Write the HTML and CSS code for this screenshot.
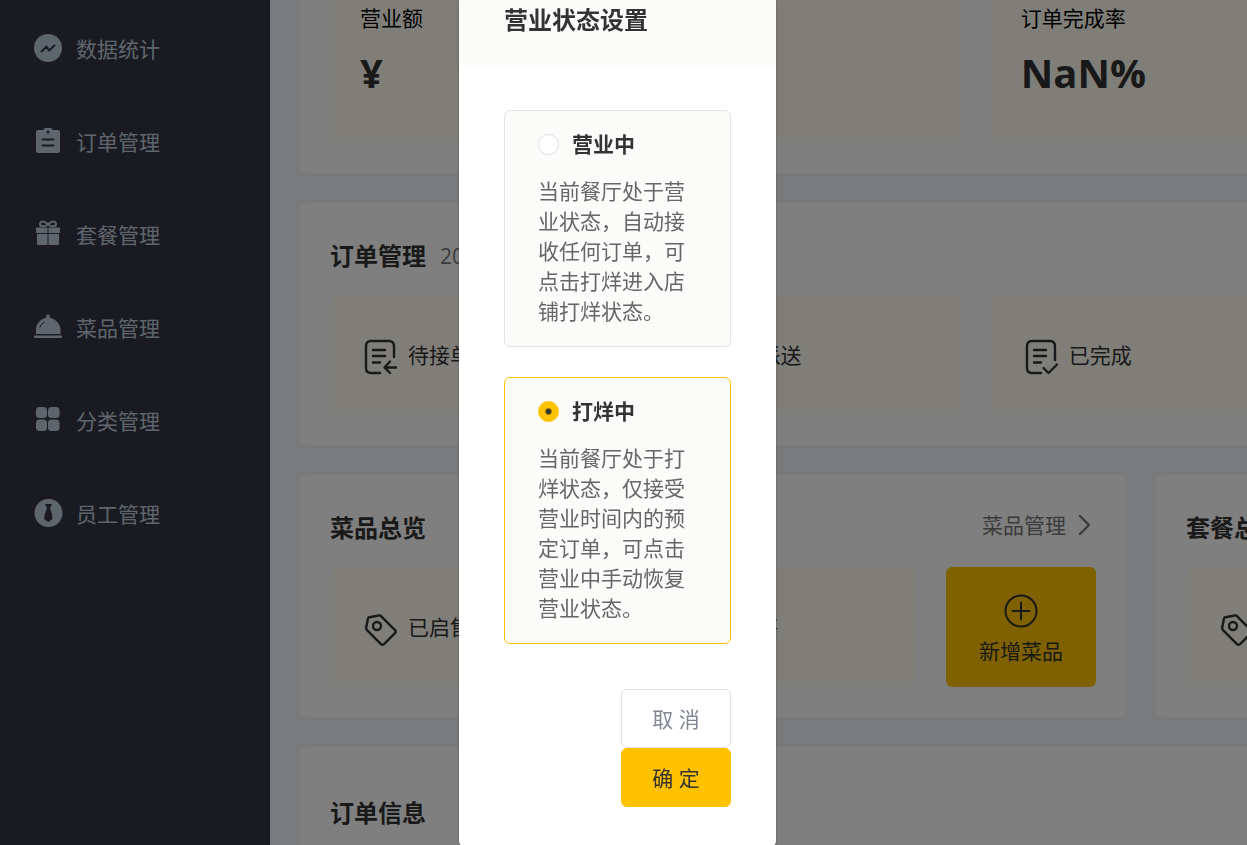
FILE: index.html
```html
<!DOCTYPE html>
<html lang="zh-CN">
<head>
    <meta charset="UTF-8">
    <meta name="viewport" content="width=device-width, initial-scale=1.0">
    <title>工作台</title>
    <link rel="stylesheet" href="styles.css">
</head>
<body>
    <div class="layout">
        <nav class="sidebar">
            <a class="menu-item" href="#">
                <svg class="menu-icon" viewBox="0 0 28 28"><circle cx="14" cy="13" r="14"/><path class="cut" d="M7.5 16.5 L12.5 11.5 L15 15.5 L20.5 10.5"/></svg>
                <span>数据统计</span>
            </a>
            <a class="menu-item" href="#">
                <svg class="menu-icon" viewBox="0 0 28 28"><path d="M4 2H9.500L10.500 0H17.500L18.500 2H24Q26 2 26 4V23Q26 25 24 25H4Q2 25 2 23V4Q2 2 4 2Z"/><circle class="hole" cx="14" cy="4" r="1.500"/><path class="cut" d="M8.500 11.500H19.500M8.500 17.500H19.500"/></svg>
                <span>订单管理</span>
            </a>
            <a class="menu-item" href="#">
                <svg class="menu-icon" viewBox="0 0 28 28"><path class="line" d="M14 3.500C11-.5 6-.5 6 3C6 6 11 6 14 3.500C17-.5 22-.5 22 3C22 6 17 6 14 3.500Z"/><path d="M3 6.500H13.500V12H2V7.500Q2 6.500 3 6.500ZM14.500 6.500H25Q26 6.500 26 7.500V12H14.500ZM3 13H13.500V24H4Q3 24 3 23ZM14.500 13H25V23Q25 24 24 24H14.500Z"/></svg>
                <span>套餐管理</span>
            </a>
            <a class="menu-item" href="#">
                <svg class="menu-icon" viewBox="0 0 28 28"><path d="M12 4V2.500A2 2 0 0 1 16 2.500V4C22 5 26.500 10 26.500 16V20H2V16C2 10 6 5 12 4Z"/><path class="cut thin" d="M6 13Q7 9.500 10.500 8"/><rect x="0" y="21.500" width="28" height="2.500" rx="1"/></svg>
                <span>菜品管理</span>
            </a>
            <a class="menu-item" href="#">
                <svg class="menu-icon" viewBox="0 0 28 28"><rect x="2" y="0" width="11" height="11" rx="3.500"/><rect x="14" y="0" width="11.500" height="11" rx="3.500"/><rect x="2" y="12.500" width="11" height="11.500" rx="3.500"/><rect x="14" y="12.500" width="11.500" height="11.500" rx="3.500"/></svg>
                <span>分类管理</span>
            </a>
            <a class="menu-item" href="#">
                <svg class="menu-icon" viewBox="0 0 28 28"><circle cx="14.500" cy="13" r="14"/><path class="hole" d="M11 4H18L16 8Q18.500 14 18.500 19L14.500 22L10 19Q10.500 13 13 8Z"/></svg>
                <span>员工管理</span>
            </a>
        </nav>

        <main class="content">
            <div class="board">
                <section class="card today">
                    <ul class="grid five">
                        <li class="stat"><p>营业额</p><strong>¥</strong></li>
                        <li class="stat"></li>
                        <li class="stat"><p>订单完成率</p><strong>NaN%</strong></li>
                        <li class="stat"></li>
                        <li class="stat"></li>
                    </ul>
                </section>

                <section class="card">
                    <header class="card-head">
                        <h2>订单管理</h2>
                        <span class="date">20</span>
                    </header>
                    <ul class="grid five">
                        <li class="tile">
                            <svg class="tile-icon" viewBox="0 -2 33 36"><path d="M29 18V7Q29 2 24 2H6Q1 2 1 7V29Q1 34 6 34H15M8 11H20M8 17H20M8 23.500H15M31 28.500H20M25 22.500L19.500 28.500L25 34"/></svg>
                            <span>待接单</span>
                        </li>
                        <li class="tile">
                            <svg class="tile-icon" viewBox="0 -2 33 36"><path d="M29 18V7Q29 2 24 2H6Q1 2 1 7V29Q1 34 6 34H15M8 11H20M8 17H20M8 23.500H15"/></svg>
                            <span>待派送</span>
                        </li>
                        <li class="tile">
                            <svg class="tile-icon" viewBox="0 -2 33 36"><path d="M29 21V7Q29 2 24 2H6Q1 2 1 7V29Q1 34 6 34H15M8 11H20M8 17H20M8 23.500H15M17.500 29L22.500 34L31 25.500"/></svg>
                            <span>已完成</span>
                        </li>
                        <li class="tile"></li>
                        <li class="tile"></li>
                    </ul>
                </section>

                <div class="grid two">
                    <section class="card">
                        <header class="card-head">
                            <h2>菜品总览</h2>
                            <a class="more" href="#">菜品管理
                                <svg class="arrow" viewBox="0 0 14 22"><path d="M2 2L11 11L2 20"/></svg>
                            </a>
                        </header>
                        <ul class="grid overview">
                            <li class="tile">
                                <svg class="tile-icon" viewBox="0 -2 33 36"><path d="M3.500 6.500L13.500 4.500Q15 4.200 16 5.200L30 19.200Q31.500 20.700 30 22.200L19 33.200Q17.500 34.500 16 33.200L2 19.200Q1 18 1.200 16.500L3 7.500Q3.200 6.700 3.500 6.500Z"/><circle cx="12" cy="15" r="4"/></svg>
                                <span>已启售</span>
                            </li>
                            <li class="tile">
                                <svg class="tile-icon" viewBox="0 -2 33 36"><path d="M3.500 6.500L13.500 4.500Q15 4.200 16 5.200L30 19.200Q31.500 20.700 30 22.200L19 33.200Q17.500 34.500 16 33.200L2 19.200Q1 18 1.200 16.500L3 7.500Q3.200 6.700 3.500 6.500Z"/></svg>
                                <span>已停售</span>
                            </li>
                            <li>
                                <a class="add" href="#">
                                    <svg class="add-icon" viewBox="0 0 34 34"><circle cx="17" cy="17" r="15.500"/><path d="M17 8.500V25.500M8.500 17H25.500"/></svg>
                                    <span>新增菜品</span>
                                </a>
                            </li>
                        </ul>
                    </section>
                    <section class="card">
                        <header class="card-head">
                            <h2>套餐总览</h2>
                        </header>
                        <ul class="grid overview">
                            <li class="tile">
                                <svg class="tile-icon" viewBox="0 -2 33 36"><path d="M3.500 6.500L13.500 4.500Q15 4.200 16 5.200L30 19.200Q31.500 20.700 30 22.200L19 33.200Q17.500 34.500 16 33.200L2 19.200Q1 18 1.200 16.500L3 7.500Q3.200 6.700 3.500 6.500Z"/><circle cx="12" cy="15" r="4"/></svg>
                            </li>
                            <li class="tile"></li>
                        </ul>
                    </section>
                </div>

                <section class="card">
                    <header class="card-head tall">
                        <h2>订单信息</h2>
                    </header>
                </section>
            </div>
        </main>
    </div>

    <div class="mask">
        <form class="dialog" role="dialog" aria-labelledby="dialogTitle">
            <header class="dialog-head">
                <h2 id="dialogTitle">营业状态设置</h2>
            </header>
            <div class="dialog-body">
                <label class="option">
                    <span class="option-title"><input type="radio" name="status" value="1">营业中</span>
                    <span class="option-desc">当前餐厅处于营业状态，自动接收任何订单，可点击打烊进入店铺打烊状态。</span>
                </label>
                <label class="option">
                    <span class="option-title"><input type="radio" name="status" value="0" checked>打烊中</span>
                    <span class="option-desc">当前餐厅处于打烊状态，仅接受营业时间内的预定订单，可点击营业中手动恢复营业状态。</span>
                </label>
            </div>
            <footer class="dialog-foot">
                <button type="button" class="btn">取 消</button>
                <button type="button" class="btn primary">确 定</button>
            </footer>
        </form>
    </div>
</body>
</html>
```
FILE: styles.css
```css
* {
    box-sizing: border-box;
}
body {
    margin: 0;
    height: 100vh;
    overflow: hidden;
    font-family: "Open Sans", "Noto Sans CJK SC", sans-serif;
    font-size: 21px;
    line-height: 30px;
    color: #333;
    background: #f3f4f7;
}
h2, p, ul {
    margin: 0;
    padding: 0;
}
h2 {
    font-size: 24px;
    font-weight: 700;
}
ul {
    list-style: none;
}
a {
    color: inherit;
    text-decoration: none;
}
svg {
    flex: none;
    overflow: visible;
    fill: none;
    stroke: #333;
    stroke-width: 2.4;
    stroke-linecap: round;
    stroke-linejoin: round;
}
.layout {
    display: flex;
    height: 100%;
}

/* sidebar */
.sidebar {
    flex: none;
    width: 270px;
    padding-top: 2px;
    background: #343744;
}
.menu-item {
    display: flex;
    align-items: center;
    gap: 14px;
    height: 93px;
    padding-left: 34px;
    color: #bfcbd9;
}
.menu-icon {
    width: 28px;
    height: 28px;
    fill: #bfcbd9;
    stroke: none;
}
.menu-icon .cut {
    fill: none;
    stroke: #343744;
    stroke-width: 2;
}
.menu-icon .thin {
    stroke-width: 1;
}
.menu-icon .hole {
    fill: #343744;
}
.menu-icon .line {
    fill: none;
    stroke: #bfcbd9;
    stroke-width: 2;
}

/* dashboard */
.content {
    flex: 1;
    min-width: 0;
    overflow: hidden;
    padding: 0 30px;
}
.board {
    display: flex;
    flex-direction: column;
    gap: 30px;
    min-width: 1682px;
}
.grid {
    display: grid;
    gap: 30px;
}
.five {
    grid-template-columns: repeat(5, 1fr);
}
.two {
    grid-template-columns: repeat(2, 1fr);
}
.overview {
    grid-template-columns: 1fr 1fr 150px;
}
.card {
    padding: 30px;
    border-radius: 6px;
    background: #fff;
}
.today {
    padding-top: 0;
    border-radius: 0 0 6px 6px;
}
.card-head {
    display: flex;
    align-items: center;
    gap: 14px;
    height: 45px;
    margin-bottom: 17px;
}
.tall {
    height: 72px;
}
.date, .more {
    color: #777;
}
.more {
    display: flex;
    align-items: center;
    align-self: flex-start;
    gap: 12px;
    height: 39px;
    margin-left: auto;
    padding-right: 4px;
}
.arrow {
    width: 14px;
    height: 22px;
    stroke: #777;
}
.stat {
    height: 143px;
    padding: 3px 30px;
    border-radius: 0 0 6px 6px;
    background: #fffcf3;
    color: #000;
}
.stat strong {
    display: block;
    margin-top: 10px;
    font-size: 40px;
    font-weight: 700;
    line-height: 60px;
    color: #333;
}
.tile {
    display: flex;
    align-items: center;
    gap: 10px;
    height: 120px;
    padding-left: 35px;
    border-radius: 6px;
    background: #fffcf3;
}
.tile-icon {
    width: 33px;
    height: 36px;
}
.add {
    display: flex;
    flex-direction: column;
    align-items: center;
    justify-content: center;
    gap: 8px;
    height: 120px;
    padding-top: 6px;
    border-radius: 6px;
    background: #ffc200;
}
.add-icon {
    width: 34px;
    height: 34px;
    stroke-width: 2;
}

/* status dialog */
.mask {
    position: fixed;
    top: 0;
    right: 0;
    bottom: 0;
    left: 0;
    display: flex;
    justify-content: center;
    align-items: flex-start;
    overflow: hidden;
    padding-right: 12px;
    background: rgba(0, 0, 0, 0.5);
}
.dialog {
    width: 317px;
    border-radius: 0 0 6px 6px;
    background: #fff;
    box-shadow: 0 1px 3px rgba(0, 0, 0, 0.3);
}
.dialog-head {
    height: 65px;
    padding: 5px 45px;
    background: #fbfbfa;
}
.dialog-body {
    display: flex;
    flex-direction: column;
    gap: 30px;
    padding: 45px;
}
.option {
    display: block;
    padding: 18px 33px 20px;
    border: 1px solid #e5e4e4;
    border-radius: 6px;
    background: #fbfbfa;
    cursor: pointer;
}
.option:has(input:checked) {
    border-color: #ffc200;
}
.option-title {
    display: flex;
    align-items: center;
    gap: 13px;
    margin-bottom: 17px;
    font-weight: 700;
}
.option-title input {
    appearance: none;
    width: 21px;
    height: 21px;
    margin: 0;
    border: 1px solid #dcdfe6;
    border-radius: 50%;
    background: #fff;
}
.option-title input:checked {
    border-color: #ffc200;
    background: radial-gradient(circle, #333 2px, #ffc200 4px);
}
.option-desc {
    display: block;
    color: #666;
}
.dialog-foot {
    display: flex;
    flex-direction: column;
    align-items: flex-end;
    padding: 0 45px 40px;
}
.btn {
    width: 110px;
    height: 59px;
    padding: 0;
    border: 1px solid #dcdfe6;
    border-radius: 6px;
    background: #fff;
    color: #818693;
    font: inherit;
    cursor: pointer;
}
.btn.primary {
    border-color: #ffc200;
    background: #ffc200;
    color: #333;
}
```
